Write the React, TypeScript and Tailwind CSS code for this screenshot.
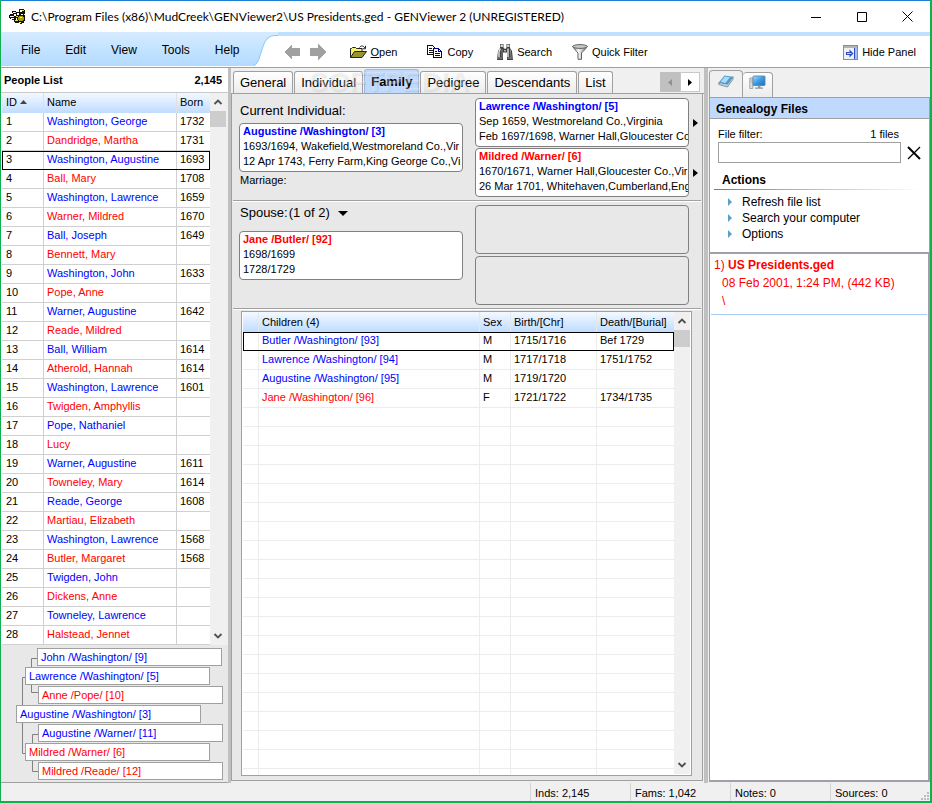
import { useState } from "react";
import type { ReactNode } from "react";

type Sex = "M" | "F";

interface Person {
  name: string;
  sex: Sex;
  born?: string;
}

const people: Person[] = [
  { name: "Washington, George", sex: "M", born: "1732" },
  { name: "Dandridge, Martha", sex: "F", born: "1731" },
  { name: "Washington, Augustine", sex: "M", born: "1693" },
  { name: "Ball, Mary", sex: "F", born: "1708" },
  { name: "Washington, Lawrence", sex: "M", born: "1659" },
  { name: "Warner, Mildred", sex: "F", born: "1670" },
  { name: "Ball, Joseph", sex: "M", born: "1649" },
  { name: "Bennett, Mary", sex: "F" },
  { name: "Washington, John", sex: "M", born: "1633" },
  { name: "Pope, Anne", sex: "F" },
  { name: "Warner, Augustine", sex: "M", born: "1642" },
  { name: "Reade, Mildred", sex: "F" },
  { name: "Ball, William", sex: "M", born: "1614" },
  { name: "Atherold, Hannah", sex: "F", born: "1614" },
  { name: "Washington, Lawrence", sex: "M", born: "1601" },
  { name: "Twigden, Amphyllis", sex: "F" },
  { name: "Pope, Nathaniel", sex: "M" },
  { name: "Lucy", sex: "F" },
  { name: "Warner, Augustine", sex: "M", born: "1611" },
  { name: "Towneley, Mary", sex: "F", born: "1614" },
  { name: "Reade, George", sex: "M", born: "1608" },
  { name: "Martiau, Elizabeth", sex: "F" },
  { name: "Washington, Lawrence", sex: "M", born: "1568" },
  { name: "Butler, Margaret", sex: "F", born: "1568" },
  { name: "Twigden, John", sex: "M" },
  { name: "Dickens, Anne", sex: "F" },
  { name: "Towneley, Lawrence", sex: "M" },
  { name: "Halstead, Jennet", sex: "F" },
];

const children = [
  { name: "Butler /Washington/ [93]", sex: "M", birth: "1715/1716", death: "Bef 1729" },
  { name: "Lawrence /Washington/ [94]", sex: "M", birth: "1717/1718", death: "1751/1752" },
  { name: "Augustine /Washington/ [95]", sex: "M", birth: "1719/1720", death: "" },
  { name: "Jane /Washington/ [96]", sex: "F", birth: "1721/1722", death: "1734/1735" },
];

const tree = [
  { name: "John /Washington/ [9]", sex: "M", indent: "ml-9" },
  { name: "Lawrence /Washington/ [5]", sex: "M", indent: "ml-6" },
  { name: "Anne /Pope/ [10]", sex: "F", indent: "ml-[37px]" },
  { name: "Augustine /Washington/ [3]", sex: "M", indent: "ml-[15px]" },
  { name: "Augustine /Warner/ [11]", sex: "M", indent: "ml-[37px]" },
  { name: "Mildred /Warner/ [6]", sex: "F", indent: "ml-6" },
  { name: "Mildred /Reade/ [12]", sex: "F", indent: "ml-[37px]" },
];

const tabs = ["General", "Individual", "Family", "Pedigree", "Descendants", "List"];
const emptyRows = Array.from({ length: 19 }, (_, i) => i);

const sexColor = (sex: string) => (sex === "M" ? "text-[#0000ff]" : "text-[#ff0000]");

function AppIcon() {
  return (
    <svg width="17" height="16" viewBox="0 0 17 16" shapeRendering="crispEdges" aria-hidden="true">
      <path
        d="M3 2h4v1h3V0h5v1h1v4h-1v1h1v6h-1v2h-2v1h-2v-1H6v-1H5v-2H3v-1H1V9H0V6h1V5h3V4H3z"
        fill="#111"
      />
      <path d="M4 3h2v1H4zM1 7h3v1H1zM5 5h2v2H5zM8 4h2v2H8zM11 1h2v2h-2zM2 9h3v1H2zM7 9h1v2H7zM12 5h2v1h-2z" fill="#fff" />
      <path d="M6 3h1v1H6zM4 7h1v1H4zM13 1h2v1h-2zM7 7h2v1H7zM6 11h3v1H6z" fill="#e8e020" />
      <path d="M10 7h4v1h1v3h-1v1h-4v-1H9V8h1z" fill="#a8a000" />
      <path d="M11 8h2v1h-2zM10 13h2v1h-2z" fill="#ffff40" />
    </svg>
  );
}

function NavArrow({ flip }: { flip?: boolean }) {
  return (
    <svg width="17" height="16" viewBox="0 0 17 16" shapeRendering="crispEdges" aria-hidden="true">
      <path d={flip ? "M16 8 8 0v4H0v8h8v4z" : "M0 8l8-8v4h8v8H8v4z"} fill="#a0a0a0" />
    </svg>
  );
}

function OpenIcon() {
  return (
    <svg width="17" height="14" viewBox="0 0 17 14" aria-hidden="true">
      <path d="M.5 12.500V3.500h1l1-1h3l1 1h5.500v3" fill="#f7f36a" stroke="#222" />
      <path d="M.5 12.500 4.500 6.500h12L12 12.500z" fill="#98962a" stroke="#222" />
      <path d="M9.500 2.500C11 .3 13.500.5 14.800 3M15.500.8v3h-3" fill="none" stroke="#222" />
    </svg>
  );
}

function CopyIcon() {
  return (
    <svg width="16" height="14" viewBox="0 0 16 14" shapeRendering="crispEdges" aria-hidden="true">
      <path d="M.5.5h5l3 3v6h-8z" fill="#fff" stroke="#111" />
      <path d="M2 3.500h3M2 5.500h4M2 7.500h4" stroke="#111" />
      <path d="M6.500 3.500h5l3 3v6h-8z" fill="#fff" stroke="#000080" />
      <path d="M11.500 3.500v3h3" fill="none" stroke="#000080" />
      <path d="M8 6.500h2M8 8.500h5M8 10.500h5" stroke="#000080" />
    </svg>
  );
}

function BinocularsIcon() {
  return (
    <svg width="16" height="16" viewBox="0 0 16 16" aria-hidden="true">
      <path d="M3 0h3.500v4L8 5l1.500-1V0H13v4l2 3 1 9h-6V8.500H6V16H0l1-9 2-3z" fill="#3f3f3f" />
      <path d="M3.500.5h2.500V3H3.500zM10 .5h2.500V3H10z" fill="#d0d0d0" />
      <path d="M3.300 4.500 2 8v5M11 4.500v8.500" stroke="#dedede" strokeWidth="1.500" fill="none" />
      <path d="M5 5v8M13.300 5.500l.7 7.500" stroke="#8c8c8c" fill="none" />
      <path d="M.5 14h5M10.500 14h5" stroke="#999" />
      <path d="M7 6h2v1.500H7z" fill="#b0b0b0" />
    </svg>
  );
}

function FunnelIcon() {
  return (
    <svg width="16" height="17" viewBox="0 0 16 17" aria-hidden="true">
      <defs>
        <linearGradient id="funnel" x1="0" x2="1">
          <stop offset="0" stopColor="#8c8c8c" />
          <stop offset=".4" stopColor="#fafafa" />
          <stop offset="1" stopColor="#777" />
        </linearGradient>
      </defs>
      <path
        d="M.7 2.500C2 4.500 4.500 7.500 6 9v6.300h3.500V9c1.500-1.500 4.500-4.500 5.800-6.500z"
        fill="url(#funnel)"
        stroke="#606060"
      />
      <ellipse cx="8" cy="2.500" rx="7.300" ry="1.900" fill="#c9c9c9" stroke="#606060" />
    </svg>
  );
}

function HidePanelIcon() {
  return (
    <svg width="15" height="15" viewBox="0 0 15 15" aria-hidden="true">
      <rect x=".5" y=".5" width="14" height="14" fill="#eef0f4" stroke="#8d8d8d" />
      <path d="M1 2h13" stroke="#b4b4b4" strokeWidth="2" />
      <rect x="12" y="3" width="2" height="11" fill="#a9bdf0" />
      <path d="M11.500 3v11" stroke="#2b4cc4" />
      <path d="M3 7h3.500V4.500L10.500 8.500l-4 4V10H3z" fill="#2b4cc4" />
      <path d="M4 8.500h4.500" stroke="#c3d0fa" />
    </svg>
  );
}

function BookIcon() {
  return (
    <svg width="16" height="14" viewBox="0 0 16 14" aria-hidden="true">
      <path d="M.8 8.500 6.500 1.500l8.500 1.200-5.500 7.500z" fill="#4d9fd0" />
      <path d="M2.500 8 6.800 2.600l5 .7-4.300 5.600z" fill="#a9dbf2" />
      <path
        d="M.8 8.500v2L9.400 13l5.600-7.800V2.700L9.500 10.200z"
        fill="#e6eef4"
        stroke="#48708e"
        strokeWidth=".7"
      />
      <path d="M.8 9.500l8.600 2 5.600-7.500" fill="none" stroke="#7b9db5" strokeWidth=".6" />
    </svg>
  );
}

function ComputerIcon() {
  return (
    <svg width="17" height="15" viewBox="0 0 17 15" aria-hidden="true">
      <defs>
        <linearGradient id="screen" x2="1" y2="1">
          <stop offset="0" stopColor="#a6e0ff" />
          <stop offset=".5" stopColor="#3a9be0" />
          <stop offset="1" stopColor="#1c6fc0" />
        </linearGradient>
      </defs>
      <path d="M.8 3h3v10.500h-3z" fill="#dcdfe3" stroke="#8e959c" strokeWidth=".8" />
      <rect x="4" y="1" width="12" height="9.500" rx=".8" fill="url(#screen)" stroke="#5b86ad" strokeWidth=".9" />
      <path d="M9 10.500h2.500v2h2.500v1.300H6v-1.300h3z" fill="#8c98a3" />
      <path d="M1.500 5h1.500M1.500 7h1.500" stroke="#9aa1a8" strokeWidth=".8" />
    </svg>
  );
}

function Chevron({ up }: { up?: boolean }) {
  return (
    <svg width="10" height="8" viewBox="0 0 10 8" aria-hidden="true">
      <path
        d={up ? "M1.500 6 5 2.500 8.500 6" : "M1.500 2 5 5.500 8.500 2"}
        fill="none"
        stroke="#505050"
        strokeWidth="1.800"
      />
    </svg>
  );
}

function ScrollBar({ thumb }: { thumb: string }) {
  return (
    <div className="flex w-4 shrink-0 flex-col items-center bg-[#f0f0f0]">
      <button type="button" aria-label="Scroll up" className="flex h-[18px] w-full items-center justify-center">
        <Chevron up />
      </button>
      <div className={`w-full bg-[#cdcdcd] ${thumb}`} />
      <div className="flex-1" />
      <button type="button" aria-label="Scroll down" className="flex h-[18px] w-full items-center justify-center">
        <Chevron />
      </button>
    </div>
  );
}

function ToolButton({ icon, children }: { icon: ReactNode; children: ReactNode }) {
  return (
    <button type="button" className="flex items-center gap-1 whitespace-nowrap text-[11px]">
      {icon}
      <span>{children}</span>
    </button>
  );
}

function PersonBox({ name, sex, lines }: { name?: string; sex?: Sex; lines?: string[] }) {
  return (
    <div
      className={`h-[49px] w-full min-w-0 overflow-hidden rounded-[4px] border border-[#808080] pl-[3px] text-[11px] leading-[15px] whitespace-nowrap ${name ? "bg-white" : ""}`}
    >
      {name && <div className={`font-bold ${sexColor(sex ?? "M")}`}>{name}</div>}
      {lines?.map((line) => (
        <div key={line}>{line}</div>
      ))}
    </div>
  );
}

function RightArrow({ label }: { label: string }) {
  return (
    <button type="button" aria-label={label} className="flex w-[13px] shrink-0 items-center justify-center">
      <svg width="5" height="8" viewBox="0 0 5 8" aria-hidden="true">
        <path d="M0 0l5 4-5 4z" fill="#000" />
      </svg>
    </button>
  );
}

function TitleBar() {
  return (
    <header className="flex h-8 items-center border-t border-[#1a7fd4] bg-white pl-2">
      <AppIcon />
      <h1 className="ml-[5px] flex-1 font-[Lato,'Open_Sans',sans-serif] text-[12px] whitespace-nowrap">
        C:\Program Files (x86)\MudCreek\GENViewer2\US Presidents.ged - GENViewer 2 (UNREGISTERED)
      </h1>
      <div className="flex">
        <button type="button" aria-label="Minimize" className="flex h-7 w-[46px] items-center justify-center">
          <svg width="10" height="10" aria-hidden="true">
            <path d="M0 5.500h10" stroke="#000" />
          </svg>
        </button>
        <button type="button" aria-label="Maximize" className="flex h-7 w-[46px] items-center justify-center">
          <svg width="10" height="10" aria-hidden="true">
            <path d="M.5.500h9v9h-9z" fill="none" stroke="#000" />
          </svg>
        </button>
        <button type="button" aria-label="Close" className="flex h-7 w-[45px] items-center justify-center">
          <svg width="11" height="11" aria-hidden="true">
            <path d="M.5.500l10 10M10.500.500l-10 10" stroke="#000" />
          </svg>
        </button>
      </div>
    </header>
  );
}

function ToolBar() {
  return (
    <div className="border-b border-[#a0a0a0] bg-white pb-px">
      <div className="flex h-[34px] bg-[#bfe0ff]">
        <nav className="flex items-center gap-[25px] bg-linear-to-b from-[#d6ebff] to-[#b2dbff] pt-[2px] pl-5 text-[12px]">
          {["File", "Edit", "View", "Tools", "Help"].map((item) => (
            <button key={item} type="button">
              {item}
            </button>
          ))}
        </nav>
        <svg width="38" height="34" viewBox="2 0 38 34" className="shrink-0" aria-hidden="true">
          <defs>
            <linearGradient id="menuFade" x2="0" y2="1">
              <stop offset="0" stopColor="#d6ebff" />
              <stop offset="1" stopColor="#b2dbff" />
            </linearGradient>
          </defs>
          <path d="M0 0h40v34H0z" fill="url(#menuFade)" />
          <path d="M16 34c5-2 6-9 9-18S31 4 38 4h2v30z" fill="#fff" stroke="#8fc8fb" strokeWidth="2" />
          <path d="M16 34c5-2 6-9 9-18S31 4 38 4h2v30z" fill="#fff" />
        </svg>
        <div className="mt-1 flex flex-1 items-center bg-white pt-[2px]">
          <div className="ml-[6px] flex gap-[9px]">
            <button type="button" aria-label="Back">
              <NavArrow />
            </button>
            <button type="button" aria-label="Forward">
              <NavArrow flip />
            </button>
          </div>
          <div className="ml-[23px] flex">
            <ToolButton icon={<OpenIcon />}>
              <span className="underline">O</span>pen
            </ToolButton>
          </div>
          <div className="ml-[30px] flex gap-6">
            <ToolButton icon={<CopyIcon />}>Copy</ToolButton>
            <ToolButton icon={<BinocularsIcon />}>Search</ToolButton>
          </div>
          <div className="ml-5">
            <ToolButton icon={<FunnelIcon />}>Quick Filter</ToolButton>
          </div>
          <div className="mr-[14px] ml-auto">
            <ToolButton icon={<HidePanelIcon />}>Hide Panel</ToolButton>
          </div>
        </div>
      </div>
    </div>
  );
}

function PeopleList({ selected, onSelect }: { selected: number; onSelect: (id: number) => void }) {
  const cell = "h-[19px] border-b border-[#d0d0d0] p-0 pb-[2px]";
  const head = "h-5 border-r border-[#e0e0e0] p-0 pb-[2px] text-left font-normal";
  return (
    <section>
      <div className="flex h-6 items-center justify-between bg-white pr-[6px] pl-[3px] text-[11px] font-bold">
        <h2>People List</h2>
        <span>2,145</span>
      </div>
      <div className="flex border-t border-[#c8c8c8] bg-white pl-px">
        <table className="w-full table-fixed border-separate border-spacing-0">
          <colgroup>
            <col className="w-[42px]" />
            <col />
            <col className="w-[33px]" />
          </colgroup>
          <thead>
            <tr className="bg-linear-to-b from-[#f4f9ff] to-[#bfdcff]">
              <th className={`${head} pl-1`}>
                <span className="flex items-center gap-[3px]">
                  ID
                  <svg width="7" height="4" aria-hidden="true">
                    <path d="M0 4l3.500-4L7 4z" fill="#444" />
                  </svg>
                </span>
              </th>
              <th className={`${head} pl-[3px]`}>Name</th>
              <th className="p-0 pb-[2px] pl-[3px] text-left font-normal">Born</th>
            </tr>
          </thead>
          <tbody>
            {people.map((person, i) => (
              <tr
                key={i}
                onClick={() => onSelect(i + 1)}
                className={selected === i + 1 ? "outline outline-1 -outline-offset-1 outline-black" : ""}
              >
                <td className={`${cell} border-r pl-1`}>{i + 1}</td>
                <td className={`${cell} border-r pl-[3px] ${sexColor(person.sex)}`}>{person.name}</td>
                <td className={`${cell} pl-[3px]`}>{person.born}</td>
              </tr>
            ))}
          </tbody>
        </table>
        <ScrollBar thumb="h-4" />
        <div className="w-[2px] shrink-0 bg-[#f0f0f0]" />
      </div>
    </section>
  );
}

function MiniTree() {
  return (
    <section className="relative flex flex-1 flex-col gap-px border-b border-[#a0a0a0] bg-[#e8e8e8] pt-[3px] pb-[2px]">
      {tree.map((node) => (
        <div
          key={node.name}
          className={`relative z-10 h-[18px] w-[185px] border border-[#a0a0a0] bg-white pl-[3px] leading-4 whitespace-nowrap ${node.indent} ${sexColor(node.sex)}`}
        >
          {node.name}
        </div>
      ))}
      <svg className="absolute top-0 left-0" width="60" height="136" aria-hidden="true">
        <path
          d="M36 13.500h-5.500v34H37M25 32.500h-3.500v76H25M37 89.500h-5.500v37H37"
          fill="none"
          stroke="#808080"
        />
      </svg>
    </section>
  );
}

function FamilyPanel() {
  const separator = "mx-px border-b border-[#a0a0a0] shadow-[0_1px_0_#fff]";
  const cell = "h-[19px] border-b border-[#ececec] p-0 pb-[2px] pl-[3px]";
  const head = "h-5 border-r border-[#e0e8f0] p-0 pl-[3px] text-left font-normal";
  const column = "border-r border-[#ececec]";
  return (
    <section className="mr-px mb-[2px] flex flex-1 flex-col border border-t-0 border-[#a0a0a0] bg-[#e8e8e8]">
      <div className="flex gap-3 pt-1 pb-[3px] pl-[7px]">
        <div className="min-w-0 flex-[224]">
          <h3 className="h-[25px] pl-px text-[13px] leading-[25px]">Current Individual:</h3>
          <PersonBox
            name="Augustine /Washington/ [3]"
            sex="M"
            lines={["1693/1694, Wakefield,Westmoreland Co.,Vir", "12 Apr 1743, Ferry Farm,King George Co.,Vi"]}
          />
          <p className="pl-px leading-[17px]">Marriage:</p>
        </div>
        <div className="flex min-w-0 flex-[227] flex-col gap-px">
          <div className="flex">
            <PersonBox
              name="Lawrence /Washington/ [5]"
              sex="M"
              lines={["Sep 1659, Westmoreland Co.,Virginia", "Feb 1697/1698, Warner Hall,Gloucester Co"]}
            />
            <RightArrow label="Show Lawrence" />
          </div>
          <div className="flex">
            <PersonBox
              name="Mildred /Warner/ [6]"
              sex="F"
              lines={["1670/1671, Warner Hall,Gloucester Co.,Vir", "26 Mar 1701, Whitehaven,Cumberland,Engl"]}
            />
            <RightArrow label="Show Mildred" />
          </div>
        </div>
      </div>
      <div className={separator} />
      <div className="flex gap-3 pt-1 pb-[3px] pl-[7px]">
        <div className="min-w-0 flex-[224]">
          <div className="flex h-[26px] gap-px pl-px text-[13px] leading-4">
            <h3>Spouse:</h3>
            <button type="button" className="flex h-4 items-center gap-2">
              (1 of 2)
              <svg width="10" height="5" aria-hidden="true">
                <path d="M0 0h10L5 5z" fill="#000" />
              </svg>
            </button>
          </div>
          <PersonBox name="Jane /Butler/ [92]" sex="F" lines={["1698/1699", "1728/1729"]} />
        </div>
        <div className="flex min-w-0 flex-[227]">
          <div className="mr-[13px] flex flex-1 flex-col gap-[2px]">
            <PersonBox />
            <PersonBox />
          </div>
        </div>
      </div>
      <div className={separator} />
      <div className="mt-[2px] mr-[10px] mb-1 ml-[9px] flex flex-1 border border-[#a0a0a0] bg-white p-px pt-0">
        <table className="w-full table-fixed border-separate border-spacing-0">
          <colgroup>
            <col className="w-4" />
            <col />
            <col className="w-[31px]" />
            <col className="w-[86px]" />
            <col className="w-[77px]" />
          </colgroup>
          <thead>
            <tr className="bg-linear-to-b from-[#f4f9ff] to-[#bfdcff]">
              <th className={head} aria-label="Marker" />
              <th className={head}>Children (4)</th>
              <th className={head}>Sex</th>
              <th className={head}>Birth/[Chr]</th>
              <th className="p-0 pl-[3px] text-left font-normal">Death/[Burial]</th>
            </tr>
          </thead>
          <tbody>
            {children.map((child, i) => (
              <tr key={child.name} className={i === 0 ? "outline outline-1 -outline-offset-1 outline-black" : ""}>
                <td className={`${cell} border-r`} />
                <td className={`${cell} border-r ${sexColor(child.sex)}`}>{child.name}</td>
                <td className={`${cell} border-r`}>{child.sex}</td>
                <td className={`${cell} border-r`}>{child.birth}</td>
                <td className={cell}>{child.death}</td>
              </tr>
            ))}
            {emptyRows.map((row) => (
              <tr key={row}>
                <td className={`${cell} border-r`} />
                <td className={`${cell} border-r`} />
                <td className={`${cell} border-r`} />
                <td className={`${cell} border-r`} />
                <td className={cell} />
              </tr>
            ))}
            <tr>
              <td className={column} />
              <td className={column} />
              <td className={column} />
              <td className={column} />
              <td />
            </tr>
          </tbody>
        </table>
        <ScrollBar thumb="h-[17px]" />
      </div>
    </section>
  );
}

function TabStrip({ active, onChange }: { active: string; onChange: (tab: string) => void }) {
  return (
    <div className="relative flex h-[26px] items-end border-b border-[#a0a0a0] bg-[#f0f0f0] pl-[2px]">
      <div className="flex items-end gap-px text-[13px]">
        {tabs.map((tab) => (
          <button
            key={tab}
            type="button"
            onClick={() => onChange(tab)}
            className={
              tab === active
                ? "h-6 rounded-t-[3px] border border-b-0 border-[#a0b8d8] bg-[#bfd9ff] px-[6px] font-bold"
                : "h-[22px] rounded-t-[3px] border border-b-0 border-[#a0a0a0] bg-linear-to-b from-white to-[#ececec] px-[6px]"
            }
          >
            {tab}
          </button>
        ))}
      </div>
      <span
        aria-hidden="true"
        className="pointer-events-none absolute top-0 left-[78px] text-[28px] leading-[28px] font-bold whitespace-nowrap text-white/30 [text-shadow:1px_1px_1px_rgba(0,0,0,0.08)]"
      >
        SOFTPEDIA<sup className="text-[9px]">®</sup>
      </span>
      <div className="mr-[4px] mb-px ml-auto flex">
        <button type="button" aria-label="Previous tabs" className="flex h-5 w-5 items-center justify-center bg-[#c0c0c0]">
          <svg width="4" height="7" aria-hidden="true">
            <path d="M4 0v7L0 3.500z" fill="#909090" />
          </svg>
        </button>
        <button
          type="button"
          aria-label="Next tabs"
          className="flex h-5 w-5 items-center justify-center border border-[#c8c8c8] bg-white"
        >
          <svg width="4" height="7" aria-hidden="true">
            <path d="M0 0v7l4-3.500z" fill="#000" />
          </svg>
        </button>
      </div>
    </div>
  );
}

function FilesPanel() {
  const [filter, setFilter] = useState("");
  return (
    <aside className="flex w-[222px] shrink-0 flex-col bg-[#f0f0f0] pl-px">
      <div className="flex h-[29px] items-end">
        <button
          type="button"
          aria-label="Files"
          className="flex h-[27px] w-[34px] justify-center rounded-t-[4px] border border-b-0 border-[#a0a0a0] pt-[3px]"
        >
          <BookIcon />
        </button>
        <button
          type="button"
          aria-label="Computer"
          className="flex h-[25px] w-[30px] justify-center rounded-t-[4px] border border-b-0 border-l-0 border-[#a0a0a0] bg-linear-to-b from-white to-[#ececec] pt-[2px]"
        >
          <ComputerIcon />
        </button>
      </div>
      <div className="mb-px flex flex-1 flex-col border-x border-[#a0a0a0] bg-white">
        <h2 className="h-[22px] border-y border-[#a0a0a0] bg-[#bfd9ff] pl-[6px] text-[12px] leading-[22px] font-bold">
          Genealogy Files
        </h2>
        <div className="flex justify-between pt-2 pr-[30px] pl-2 leading-[15px]">
          <label htmlFor="file-filter">File filter:</label>
          <span>1 files</span>
        </div>
        <div className="flex items-center gap-[6px] pr-2 pl-2">
          <input
            id="file-filter"
            value={filter}
            onChange={(e) => setFilter(e.target.value)}
            className="h-[21px] min-w-0 flex-1 border border-[#a0a0a0] bg-white px-1"
          />
          <button type="button" aria-label="Clear filter" onClick={() => setFilter("")}>
            <svg width="14" height="14" viewBox="0 0 14 14" aria-hidden="true">
              <path d="M1 1l12 12" stroke="#000" strokeWidth="2" />
              <path d="M13 1 1 13" stroke="#000" strokeWidth="1.300" />
            </svg>
          </button>
        </div>
        <h3 className="mt-[9px] mb-px pl-3 text-[12px] leading-4 font-bold">Actions</h3>
        <div className="mr-2 ml-1 h-px bg-linear-to-r from-[#3a8ad8] to-white" />
        <ul className="pt-1 pb-[10px] pl-[18px] text-[12px] leading-4">
          {["Refresh file list", "Search your computer", "Options"].map((action) => (
            <li key={action}>
              <button type="button" className="flex items-center gap-[10px]">
                <svg width="4" height="8" aria-hidden="true">
                  <path d="M0 0l4 4-4 4z" fill="#5aa0c8" />
                </svg>
                {action}
              </button>
            </li>
          ))}
        </ul>
        <div className="flex flex-1 flex-col border-y-2 border-r border-[#a0a0a8]">
          <div className="mx-px border-b border-[#a6caf0] pt-[2px] pb-1 pl-[3px] text-[12px] leading-[18px] text-[#ff0000]">
            <div>
              1) <b>US Presidents.ged</b>
            </div>
            <div className="pl-2">08 Feb 2001, 1:24 PM, (442 KB)</div>
            <div className="pl-2">\</div>
          </div>
        </div>
      </div>
    </aside>
  );
}

function StatusBar() {
  return (
    <footer className="relative flex h-[18px] justify-end bg-[#f0f0f0]">
      {["Inds: 2,145", "Fams: 1,042", "Notes: 0", "Sources: 0"].map((item) => (
        <div key={item} className="w-[100px] border-l border-[#d4d4d4] pl-1 leading-5">
          {item}
        </div>
      ))}
      <svg className="absolute right-px bottom-px" width="8" height="8" aria-hidden="true">
        <path d="M6 0h2v2H6zM3 3h2v2H3zM6 3h2v2H6zM0 6h2v2H0zM3 6h2v2H3zM6 6h2v2H6z" fill="#bcbcbc" />
      </svg>
    </footer>
  );
}

export default function App() {
  const [selected, setSelected] = useState(3);
  const [tab, setTab] = useState("Family");

  return (
    <div className="flex min-h-screen flex-col border-r-2 border-b-2 border-l border-[#10b050] bg-[#f0f0f0] font-['Liberation_Sans',Arial,sans-serif] text-[11px] leading-[14px] text-black">
      <TitleBar />
      <ToolBar />
      <main className="flex flex-1">
        <div className="flex w-[227px] shrink-0 flex-col">
          <PeopleList selected={selected} onSelect={setSelected} />
          <MiniTree />
        </div>
        <div className="w-[3px] shrink-0 bg-[#c0c0c0]" />
        <div className="flex min-w-0 flex-1 flex-col">
          <TabStrip active={tab} onChange={setTab} />
          <FamilyPanel />
        </div>
        <div className="w-1 shrink-0 bg-[#c0c0c0]" />
        <FilesPanel />
      </main>
      <StatusBar />
    </div>
  );
}
